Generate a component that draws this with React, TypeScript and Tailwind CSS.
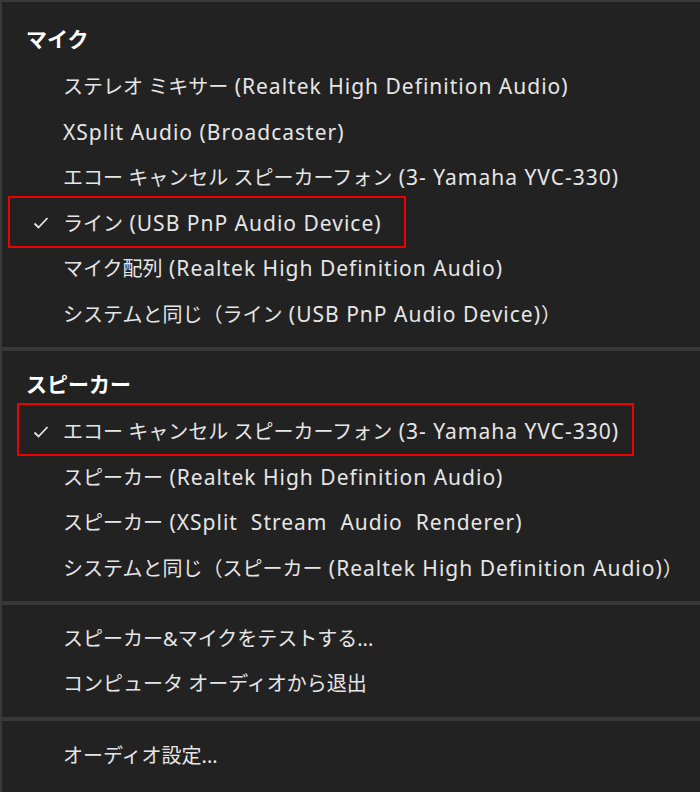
import React from 'react';

const font = { fontFamily: '"Noto Sans", "Noto Sans CJK JP", sans-serif' };

type Item = { label: string; checked?: boolean; boxed?: 'mic' | 'spk' };

// Latin runs are drawn a little larger and wider, like Segoe UI next to Yu Gothic
const Label = ({ text }: { text: string }) => {
  const parts = text.match(/[\x20-\x7e]+|[^\x20-\x7e]+/g) || [];
  return (
    <span>
      {parts.map((p, i) =>
        /^[\x20-\x7e]+$/.test(p) && /[A-Za-z0-9()]/.test(p) ? (
          <span key={i} className="text-[21px] tracking-[1px]">{p}</span>
        ) : (
          <span key={i}>{p}</span>
        )
      )}
    </span>
  );
};

const Check = () => (
  <svg width="16" height="14" viewBox="0 0 16 14" className="absolute left-[31px] top-1/2 -translate-y-1/2">
    <polyline points="1.5,7.5 5.5,11.5 14.5,2" fill="none" stroke="#e6e6e6" strokeWidth="1.8" />
  </svg>
);

const Row = ({ item }: { item: Item }) => (
  <div className="relative h-[45.5px] flex items-center pl-[61px] text-[20px] text-[#e6e6e6] whitespace-pre">
    {item.checked && <Check />}
    {item.boxed === 'mic' && (
      <div className="absolute left-[6px] w-[398px] top-[-5px] h-[52px] border-2 border-[#ee0000]" />
    )}
    {item.boxed === 'spk' && (
      <div className="absolute left-[15px] w-[617px] top-[-6px] h-[53px] border-2 border-[#ee0000]" />
    )}
    <Label text={item.label} />
  </div>
);

const Header = ({ title }: { title: string }) => (
  <div className="h-[48px] flex items-center pl-[24px] text-[21px] font-bold text-white">{title}</div>
);

const Sep = () => <div className="mt-[10px] mb-[10px] h-[4px] bg-[#383838]" />;

const mic: Item[] = [
  { label: 'ステレオ ミキサー (Realtek High Definition Audio)' },
  { label: 'XSplit Audio (Broadcaster)' },
  { label: 'エコー キャンセル スピーカーフォン (3- Yamaha YVC-330)' },
  { label: 'ライン (USB PnP Audio Device)', checked: true, boxed: 'mic' },
  { label: 'マイク配列 (Realtek High Definition Audio)' },
  { label: 'システムと同じ（ライン (USB PnP Audio Device)）' },
];

const spk: Item[] = [
  { label: 'エコー キャンセル スピーカーフォン (3- Yamaha YVC-330)', checked: true, boxed: 'spk' },
  { label: 'スピーカー (Realtek High Definition Audio)' },
  { label: 'スピーカー (XSplit  Stream  Audio  Renderer)' },
  { label: 'システムと同じ（スピーカー (Realtek High Definition Audio)）' },
];

export default function App() {
  return (
    <div style={font} className="w-[700px] h-[792px] overflow-hidden bg-[#222222] border-t-2 border-l-2 border-[#3a3a3a]">
      <div className="pt-[14px]">
        <Header title="マイク" />
        {mic.map((m, i) => <Row key={i} item={m} />)}
      </div>
      <Sep />
      <Header title="スピーカー" />
      {spk.map((s, i) => <Row key={i} item={s} />)}
      <Sep />
      <div className="pt-[1px]">
        <Row item={{ label: 'スピーカー&マイクをテストする...' }} />
        <Row item={{ label: 'コンピュータ オーディオから退出' }} />
      </div>
      <Sep />
      <div className="pt-[2px]">
        <Row item={{ label: 'オーディオ設定...' }} />
      </div>
    </div>
  );
}
